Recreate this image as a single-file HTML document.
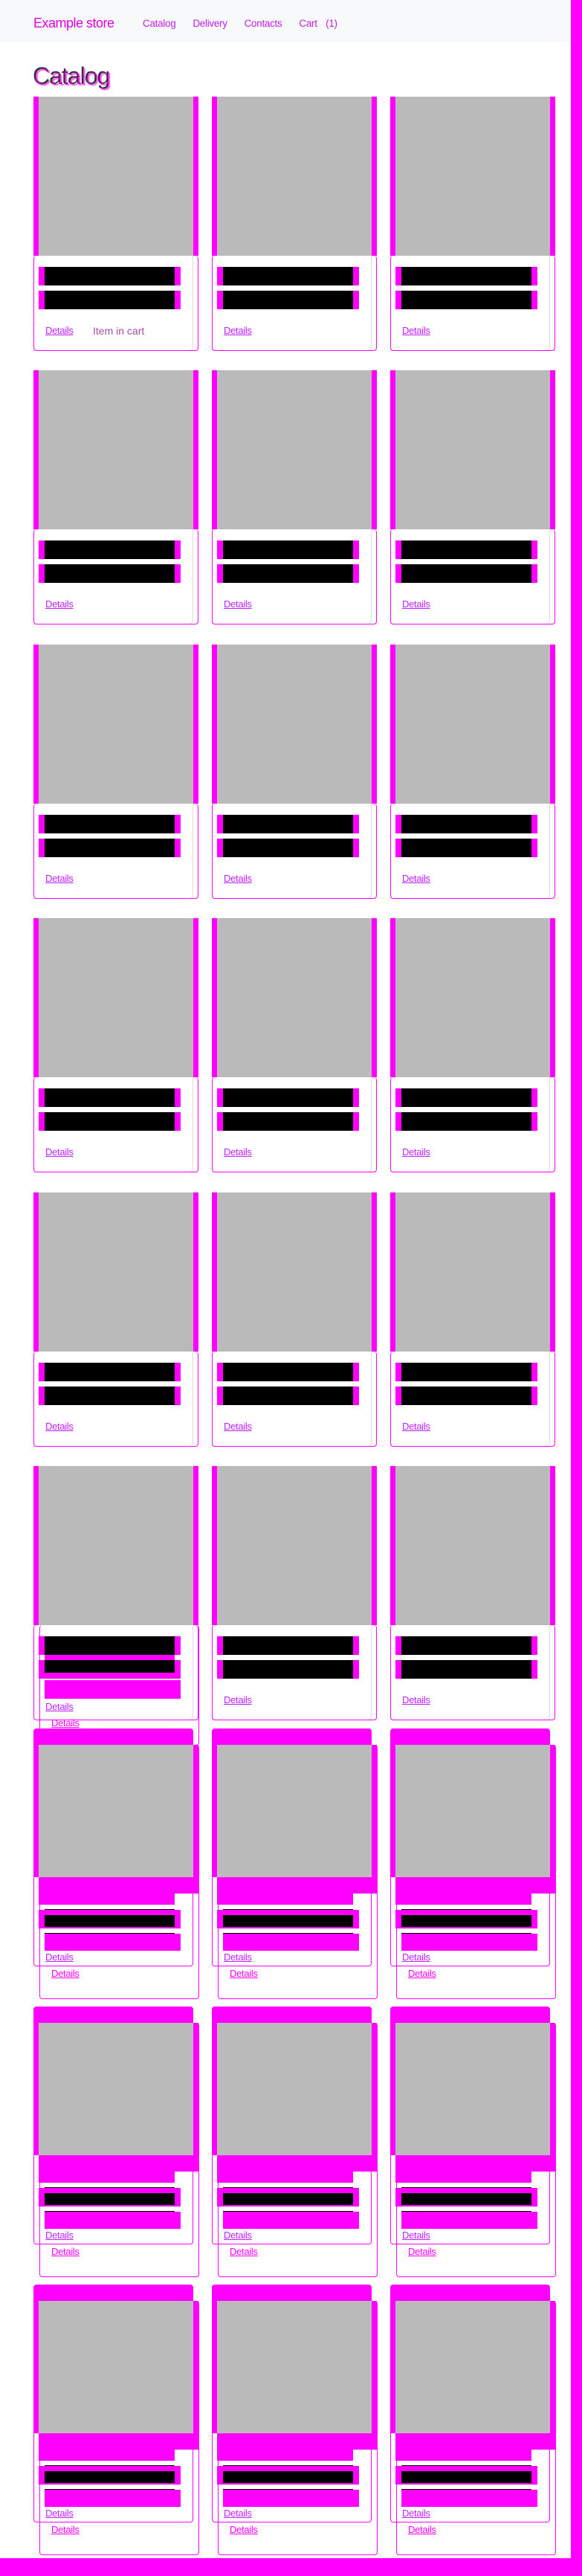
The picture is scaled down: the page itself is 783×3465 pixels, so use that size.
<!DOCTYPE html>
<html><head><meta charset="utf-8"><style>
*{margin:0;padding:0;box-sizing:border-box}
html,body{width:783px;height:3465px;overflow:hidden;background:#fff;font-family:"Liberation Sans",sans-serif;position:relative}
.a{position:absolute}
.m{background:#ff00ff}
.g{background:#bababa}
.k{background:#000}
.hdr{left:0;top:0;width:768px;height:56px;background:#f8f9fa}
.card{position:absolute;width:230px;height:380px}
.bd{position:absolute;border:1px solid #ddd;border-radius:5px}
.ol{position:absolute;border:1px solid #ff00ff;border-radius:4px}
.lnk{position:absolute;font-size:13px;color:#c020ff;text-decoration:underline;letter-spacing:-0.3px}
</style></head><body>
<div class="a hdr"></div>
<div class="a" style="left:45px;top:21px;font-size:18px;color:#e000e0;letter-spacing:-0.5px">Example store</div>
<div class="a" style="left:192px;top:24px;font-size:13.5px;color:#c020e0;word-spacing:8px;letter-spacing:-0.3px">Catalog&nbsp; Delivery&nbsp; Contacts&nbsp; Cart (1)</div>
<div class="a" style="left:44px;top:84px;font-size:32px;color:#333;letter-spacing:-1px">Catalog</div>
<div class="a" style="left:46px;top:86px;font-size:32px;color:#ff00ff;opacity:.6;letter-spacing:-1px">Catalog</div>
<div class="a m" style="left:768px;top:0;width:15px;height:3465px"></div>
<div class="a m" style="left:0;top:3441px;width:783px;height:24px"></div>

<div id="cards"></div>
<script>
var H='';
var cols=[45,285,525];
var rowsA=[130,498,867,1235,1604];
function normal(x,T,first,r6){
 var s='';
 s+='<div class="bd" style="left:'+x+'px;top:'+T+'px;width:215px;height:342px"></div>';
 s+='<div class="a m" style="left:'+x+'px;top:'+T+'px;width:7px;height:214px"></div>';
 s+='<div class="a g" style="left:'+(x+7)+'px;top:'+T+'px;width:208px;height:214px"></div>';
 s+='<div class="a m" style="left:'+(x+215)+'px;top:'+T+'px;width:7px;height:214px"></div>';
 s+='<div class="ol" style="left:'+x+'px;top:'+(T+214)+'px;width:222px;height:128px;border-top:none"></div>';
 s+='<div class="a m" style="left:'+(x+7)+'px;top:'+(T+229)+'px;width:191px;height:25px"></div>';
 s+='<div class="a k" style="left:'+(x+15)+'px;top:'+(T+229)+'px;width:175px;height:25px"></div>';
 s+='<div class="a m" style="left:'+(x+7)+'px;top:'+(T+261)+'px;width:191px;height:25px"></div>';
 s+='<div class="a k" style="left:'+(x+15)+'px;top:'+(T+261)+'px;width:175px;height:'+(r6?17:25)+'px"></div>';
 if(r6){
  s+='<div class="a m" style="left:'+(x+15)+'px;top:'+(T+254)+'px;width:175px;height:7px"></div>';
  s+='<div class="a m" style="left:'+(x+15)+'px;top:'+(T+288)+'px;width:183px;height:25px"></div>';
  s+='<div class="lnk" style="left:'+(x+16)+'px;top:'+(T+316)+'px">Details</div>';
  s+='<div class="lnk" style="left:'+(x+24)+'px;top:'+(T+338)+'px;color:#ff00ff">Details</div>';
  s+='<div class="ol" style="left:'+(x+8)+'px;top:'+(T+214)+'px;width:215px;height:162px;border-top:none"></div>';
 } else {
  s+='<div class="lnk" style="left:'+(x+16)+'px;top:'+(T+307)+'px">Details</div>';
 }
 if(first){s+='<div class="a" style="left:'+(x+80)+'px;top:'+(T+307)+'px;font-size:14px;color:#a050a0">Item in cart</div>';}
 return s;
}
function alt(x,T){
 var s='';
 s+='<div class="ol" style="left:'+x+'px;top:'+T+'px;width:215px;height:320px"></div>';
 s+='<div class="ol" style="left:'+(x+8)+'px;top:'+(T+22)+'px;width:215px;height:342px"></div>';
 s+='<div class="a m" style="left:'+x+'px;top:'+T+'px;width:215px;height:22px;border-radius:5px 5px 0 0"></div>';
 s+='<div class="a m" style="left:'+x+'px;top:'+(T+22)+'px;width:7px;height:178px"></div>';
 s+='<div class="a g" style="left:'+(x+7)+'px;top:'+(T+22)+'px;width:208px;height:178px"></div>';
 s+='<div class="a m" style="left:'+(x+215)+'px;top:'+(T+22)+'px;width:7px;height:178px"></div>';
 s+='<div class="a m" style="left:'+(x+7)+'px;top:'+(T+200)+'px;width:215px;height:22px"></div>';
 s+='<div class="a m" style="left:'+(x+7)+'px;top:'+(T+222)+'px;width:183px;height:15px"></div>';
 s+='<div class="a m" style="left:'+(x+7)+'px;top:'+(T+244)+'px;width:191px;height:25px"></div>';
 s+='<div class="a k" style="left:'+(x+15)+'px;top:'+(T+251)+'px;width:175px;height:16px"></div>';
 s+='<div class="a k" style="left:'+(x+15)+'px;top:'+(T+243)+'px;width:175px;height:1px"></div>';
 s+='<div class="a k" style="left:'+(x+15)+'px;top:'+(T+275)+'px;width:175px;height:1px"></div>';
 s+='<div class="a m" style="left:'+(x+15)+'px;top:'+(T+276)+'px;width:183px;height:23px"></div>';
 s+='<div class="lnk" style="left:'+(x+16)+'px;top:'+(T+300)+'px">Details</div>';
 s+='<div class="lnk" style="left:'+(x+24)+'px;top:'+(T+322)+'px;color:#ff00ff">Details</div>';
 return s;
}
for(var r=0;r<rowsA.length;r++)for(var c=0;c<3;c++)H+=normal(cols[c],rowsA[r],r==0&&c==0,false);
for(var c=0;c<3;c++)H+=normal(cols[c],1972,false,c==0);
var rowsB=[2325,2699,3073];
for(var r=0;r<3;r++)for(var c=0;c<3;c++)H+=alt(cols[c],rowsB[r]);
document.getElementById('cards').innerHTML=H;
</script>
</body></html>
